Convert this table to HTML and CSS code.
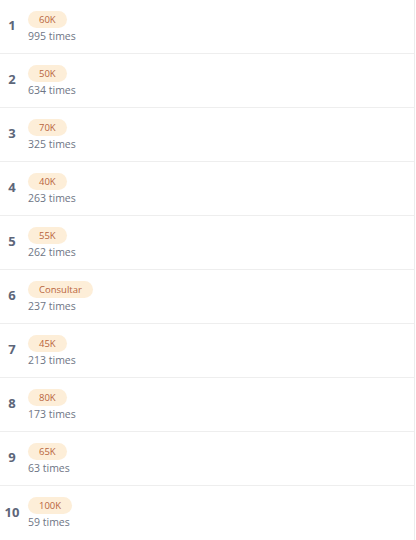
FILE: index.html
```html
<!DOCTYPE html>
<html>
<head>
<meta charset="utf-8">
<link rel="stylesheet" href="styles.css">
</head>
<body>
<div class="list">
  <div class="row"><div class="rank">1</div><div class="info"><span class="badge">60K</span><span class="times">995 times</span></div></div>
  <div class="row"><div class="rank">2</div><div class="info"><span class="badge">50K</span><span class="times">634 times</span></div></div>
  <div class="row"><div class="rank">3</div><div class="info"><span class="badge">70K</span><span class="times">325 times</span></div></div>
  <div class="row"><div class="rank">4</div><div class="info"><span class="badge">40K</span><span class="times">263 times</span></div></div>
  <div class="row"><div class="rank">5</div><div class="info"><span class="badge">55K</span><span class="times">262 times</span></div></div>
  <div class="row"><div class="rank">6</div><div class="info"><span class="badge">Consultar</span><span class="times">237 times</span></div></div>
  <div class="row"><div class="rank">7</div><div class="info"><span class="badge">45K</span><span class="times">213 times</span></div></div>
  <div class="row"><div class="rank">8</div><div class="info"><span class="badge">80K</span><span class="times">173 times</span></div></div>
  <div class="row"><div class="rank">9</div><div class="info"><span class="badge">65K</span><span class="times">63 times</span></div></div>
  <div class="row last"><div class="rank">10</div><div class="info"><span class="badge">100K</span><span class="times">59 times</span></div></div>
</div>
</body>
</html>
```
FILE: styles.css
```css
html, body {
  margin: 0;
  padding: 0;
  background: #ffffff;
}
body {
  font-family: "Open Sans", "Noto Sans", sans-serif;
}
.list {
  width: 415px;
  height: 540px;
  border-right: 1px solid #ececec;
  box-sizing: border-box;
}
.row {
  display: flex;
  align-items: center;
  height: 54px;
  border-bottom: 1px solid #eeeeee;
  box-sizing: border-box;
}
.row.last {
  border-bottom: none;
}
.rank {
  width: 24px;
  text-align: center;
  font-size: 13px;
  font-weight: 700;
  color: #5d6679;
  margin-top: -3px;
}
.info {
  display: flex;
  flex-direction: column;
  align-items: flex-start;
  margin-left: 4px;
}
.badge {
  display: inline-block;
  height: 17px;
  line-height: 17px;
  padding: 0 11px;
  border-radius: 9px;
  background: #fdeed8;
  color: #b8643d;
  font-size: 9.5px;
}
.times {
  margin-top: 1px;
  font-size: 10.5px;
  line-height: 14px;
  color: #6e7585;
}
```
